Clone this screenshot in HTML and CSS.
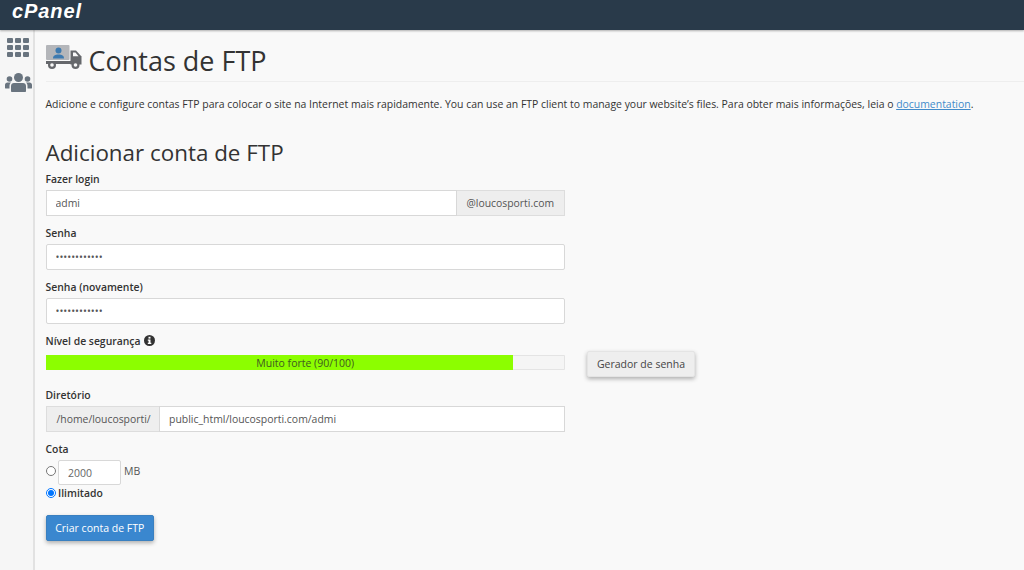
FILE: index.html
```html
<!DOCTYPE html>
<html lang="pt">
<head>
	<meta charset="UTF-8">
	<title>Contas de FTP</title>
	<link rel="stylesheet" href="styles.css">
</head>
<body>
	<header class="topbar">
		<span class="logo">cPanel</span>
	</header>
	<div class="wrap">
		<nav class="sidebar">
			<svg class="nav-grid" width="22" height="19" viewBox="0 0 22 19">
				<rect x="0" y="0" width="6" height="5" rx="1"/><rect x="8" y="0" width="6" height="5" rx="1"/><rect x="16" y="0" width="6" height="5" rx="1"/>
				<rect x="0" y="7" width="6" height="5" rx="1"/><rect x="8" y="7" width="6" height="5" rx="1"/><rect x="16" y="7" width="6" height="5" rx="1"/>
				<rect x="0" y="14" width="6" height="5" rx="1"/><rect x="8" y="14" width="6" height="5" rx="1"/><rect x="16" y="14" width="6" height="5" rx="1"/>
			</svg>
			<svg class="nav-users" width="27" height="19" viewBox="0 0 27 19">
				<circle cx="13.5" cy="4.5" r="4.5"/><circle cx="4.5" cy="6" r="2.8"/><circle cx="22.5" cy="6" r="2.8"/>
				<path d="M0 15v-3c0-1.500 1-2.500 2.500-2.500h3.500c-1 1-1.500 2-1.500 3.500v2.500H1.500C.5 15.500 0 15.500 0 15z"/>
				<path d="M27 15v-3c0-1.500-1-2.500-2.500-2.500H21c1 1 1.500 2 1.500 3.500v2.500h3C26.500 15.500 27 15.500 27 15z"/>
				<path d="M6 18v-5c0-2 1.300-3 3-3h9c1.700 0 3 1 3 3v5c0 .7-.5 1-1 1H7c-.5 0-1-.3-1-1z"/>
			</svg>
		</nav>
		<main class="content">
			<div class="page-head">
				<svg class="ftp-icon" width="36" height="24" viewBox="0 0 36 24">
					<rect x="0" y="0" width="23.500" height="15" rx="1" fill="#b4b6ba"/>
					<circle cx="12.500" cy="5.500" r="3" fill="#3d7ab0"/>
					<path d="M7 13.500c0-3 2-4 5.500-4s5.500 1 5.500 4z" fill="#3d7ab0"/>
					<path d="M24.500 5.500h5.500l5.500 6v8h-11z" fill="#66686c"/>
					<path d="M27 7.500h2.500l3 3.800h-5.500z" fill="#f9f9f9"/>
					<rect x="0" y="16" width="25" height="3" fill="#66686c"/>
					<circle cx="6" cy="20" r="4" fill="#66686c"/><circle cx="6" cy="20" r="1.800" fill="#f9f9f9"/>
					<circle cx="29.500" cy="20" r="4" fill="#66686c"/><circle cx="29.500" cy="20" r="1.800" fill="#f9f9f9"/>
				</svg>
				<h1>Contas de FTP</h1>
			</div>
			<p class="intro">Adicione e configure contas FTP para colocar o site na Internet mais rapidamente. You can use an FTP client to manage your website’s files. Para obter mais informações, leia o <a href="#">documentation</a>.</p>
			<h2>Adicionar conta de FTP</h2>
			<form class="ftp-form">
				<div class="field">
					<label>Fazer login</label>
					<div class="input-group">
						<input class="text-input" type="text" value="admi">
						<span class="addon addon-right">@loucosporti.com</span>
					</div>
				</div>
				<div class="field">
					<label>Senha</label>
					<input class="text-input" type="password" value="aaaaaaaaaaaa">
				</div>
				<div class="field">
					<label>Senha (novamente)</label>
					<input class="text-input" type="password" value="aaaaaaaaaaaa">
				</div>
				<div class="field strength">
					<label>Nível de segurança
						<svg class="info" width="11" height="11" viewBox="0 0 11 11">
							<circle cx="5.500" cy="5.500" r="5.500" fill="#333"/>
							<rect x="4.500" y="1.800" width="2" height="1.800" fill="#fff"/>
							<path d="M3.800 4.500h2.700v3.300h.8v1.200H3.800V7.800h.8V5.700h-.8z" fill="#fff"/>
						</svg>
					</label>
					<div class="strength-row">
						<div class="meter">
							<div class="meter-fill" style="width: 90%"></div>
							<span class="meter-text">Muito forte (90/100)</span>
						</div>
						<button class="btn-gen" type="button">Gerador de senha</button>
					</div>
				</div>
				<div class="field">
					<label>Diretório</label>
					<div class="input-group">
						<span class="addon addon-left">/home/loucosporti/</span>
						<input class="text-input" type="text" value="public_html/loucosporti.com/admi">
					</div>
				</div>
				<div class="field quota">
					<label>Cota</label>
					<div class="quota-row">
						<input type="radio" name="cota">
						<input class="quota-input" type="text" value="2000">
						<span class="unit">MB</span>
					</div>
					<div class="unlimited-row">
						<input type="radio" name="cota" checked>
						<span class="unlimited">Ilimitado</span>
					</div>
				</div>
				<button class="btn-primary" type="button">Criar conta de FTP</button>
			</form>
		</main>
	</div>
</body>
</html>
```

FILE: styles.css
```css
*{
	margin: 0;
	padding: 0;
	box-sizing: border-box;
}
html,body{
	height: 100%;
	overflow: hidden;
}
body{
	background: #f9f9f9;
	font-family: "Open Sans", sans-serif;
	font-size: 10.5px;
	color: #333333;
}
.topbar{
	height: 30px;
	background: #293a4a;
	padding-left: 12px;
	box-shadow: 0 1px 2px rgba(0,0,0,0.3);
	position: relative;
}
.logo{
	display: block;
	font-family: "Liberation Sans", sans-serif;
	font-style: italic;
	font-weight: 700;
	font-size: 20px;
	line-height: 23px;
	letter-spacing: 0.9px;
	color: #ffffff;
}
.wrap{
	display: flex;
	height: 540px;
}
.sidebar{
	width: 35px;
	flex-shrink: 0;
	background: #f6f6f6;
	border-right: 2px solid #e2e2e2;
	display: flex;
	flex-direction: column;
	align-items: center;
	padding-top: 8px;
	padding-left: 3px;
}
.sidebar svg{
	fill: #69747f;
}
.nav-users{
	margin-top: 16px;
}
.content{
	flex: 1;
	padding-left: 10.5px;
}
.page-head{
	display: flex;
	align-items: flex-start;
	gap: 7px;
	height: 52px;
	padding-top: 15px;
	border-bottom: 1px solid #eeeeee;
}
.page-head h1{
	font-size: 27px;
	font-weight: 400;
	line-height: 32px;
	color: #333333;
}
.ftp-icon{
	flex-shrink: 0;
}
.intro{
	margin-top: 15px;
	font-size: 10.45px;
	line-height: 15px;
	white-space: nowrap;
}
.intro a{
	color: #428bca;
}
h2{
	margin-top: 27px;
	margin-bottom: 5px;
	font-size: 22.4px;
	font-weight: 400;
	line-height: 28px;
}
.ftp-form{
	width: 519.5px;
}
.field{
	margin-bottom: 10px;
}
.field label{
	display: block;
	font-weight: 600;
	font-size: 10.4px;
	line-height: 15px;
	margin-bottom: 3px;
}
.info{
	vertical-align: -1px;
	margin-left: 1px;
}
.text-input{
	display: block;
	width: 100%;
	height: 26px;
	border: 1px solid #d8d8d8;
	border-radius: 2px;
	background: #ffffff;
	padding: 0 9px;
	font-family: "Open Sans", sans-serif;
	font-size: 10.45px;
	color: #555555;
	outline: none;
}
.input-group{
	display: flex;
}
.input-group .text-input{
	flex: 1;
	min-width: 0;
	border-radius: 0;
}
.addon{
	height: 26px;
	flex-shrink: 0;
	background: #eeeeee;
	border: 1px solid #dddddd;
	padding: 0 10px;
	line-height: 24px;
	font-size: 10.4px;
	color: #555555;
}
.addon-right{
	width: 108.5px;
	border-left: 0;
}
.addon-left{
	width: 113.5px;
	border-right: 0;
}
.strength{
	margin-bottom: 11px;
}
.strength label{
	margin-bottom: 2px;
}
.strength-row{
	display: flex;
	align-items: flex-start;
	gap: 22px;
	width: 660px;
}
.meter{
	width: 519.5px;
	height: 15px;
	margin-top: 4px;
	flex-shrink: 0;
	position: relative;
	background: #f5f5f5;
	box-shadow: inset 0 0 0 1px #e4e4e4;
	border-radius: 1px;
}
.meter-fill{
	height: 100%;
	background: #8cfe00;
}
.meter-text{
	position: absolute;
	left: 0;
	right: 0;
	top: 1px;
	text-align: center;
	font-size: 10.5px;
	line-height: 15px;
	color: #3f5a20;
}
.btn-gen{
	width: 108px;
	height: 26px;
	flex-shrink: 0;
	background: #eeeeee;
	border: 1px solid #e4e4e4;
	border-radius: 2px;
	box-shadow: 0 2px 4px rgba(0,0,0,0.3);
	font-family: "Open Sans", sans-serif;
	font-size: 10.5px;
	color: #444444;
}
.quota{
	margin-bottom: 15px;
}
.quota-row,.unlimited-row{
	display: flex;
	align-items: center;
}
.quota-row input[type=radio],.unlimited-row input[type=radio]{
	width: 10px;
	height: 10px;
	margin-right: 2.5px;
	flex-shrink: 0;
}
.quota-row input[type=radio]{
	margin-top: -4px;
}
.quota-input{
	width: 63px;
	height: 25px;
	border: 1px solid #d8d8d8;
	border-radius: 2px;
	background: #ffffff;
	padding: 0 9px;
	font-family: "Open Sans", sans-serif;
	font-size: 10.5px;
	color: #666666;
}
.unit{
	margin-left: 3px;
	margin-top: -3px;
	color: #555555;
}
.unlimited-row{
	height: 15px;
}
.unlimited{
	font-weight: 600;
	font-size: 10.4px;
}
.btn-primary{
	display: block;
	width: 108.5px;
	height: 25.5px;
	background: #3a87cf;
	border: 1px solid #3a80c0;
	border-radius: 2px;
	box-shadow: 0 2px 4px rgba(0,0,0,0.3);
	font-family: "Open Sans", sans-serif;
	font-size: 10.5px;
	color: #ffffff;
}
```
